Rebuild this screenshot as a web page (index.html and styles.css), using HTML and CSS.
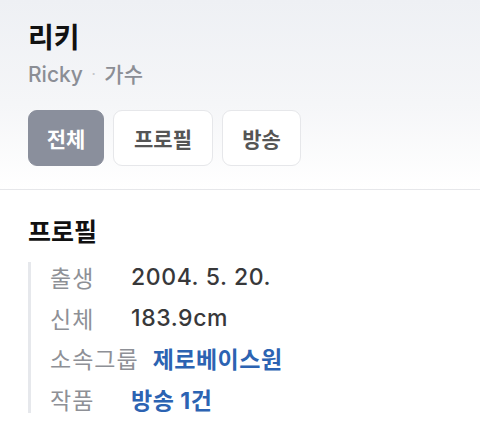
FILE: index.html
```html
<!DOCTYPE html>
<html lang="ko">
<head>
<meta charset="utf-8">
<link rel="stylesheet" href="styles.css">
</head>
<body>
<div class="page">
  <header class="hero">
    <h1 class="name">리키</h1>
    <p class="sub">Ricky <span class="dot">·</span> 가수</p>
    <nav class="tabs">
      <button class="tab active">전체</button>
      <button class="tab">프로필</button>
      <button class="tab">방송</button>
    </nav>
  </header>
  <section class="profile">
    <h2 class="heading">프로필</h2>
    <dl class="info">
      <div class="row"><dt>출생</dt><dd>2004. 5. 20.</dd></div>
      <div class="row"><dt>신체</dt><dd>183.9cm</dd></div>
      <div class="row"><dt>소속그룹</dt><dd class="link">제로베이스원</dd></div>
      <div class="row"><dt>작품</dt><dd class="link">방송 1건</dd></div>
    </dl>
  </section>
</div>
</body>
</html>
```

FILE: styles.css
```css
* { box-sizing: border-box; }
html, body { margin: 0; padding: 0; }
body {
  background: #fff;
  font-family: "Noto Sans CJK KR", "Noto Sans", sans-serif;
  color: #111;
  width: 480px;
  height: 423px;
  overflow: hidden;
}
.hero {
  background: linear-gradient(to bottom, #eef0f4 0%, #f5f6f8 55%, #ffffff 100%);
  padding: 16px 0 23px 28px;
  border-bottom: 1px solid #e6e7ea;
}
.name {
  margin: 0;
  font-size: 28px;
  font-weight: 700;
  line-height: 40px;
  color: #111;
}
.sub {
  margin: 0;
  font-size: 21px;
  line-height: 36px;
  color: #8b8e95;
  font-family: "Inter", "Noto Sans CJK KR", sans-serif;
  font-weight: 500;
}
.sub .dot { color: #c4c6ca; font-size: 14px; margin: 0 3px; vertical-align: 3px; }
.tabs {
  display: flex;
  gap: 9px;
  margin-top: 17px;
}
.tab {
  height: 56px;
  padding: 0 16px;
  border: 1px solid #e6e7ea;
  border-radius: 9px;
  background: #fff;
  font-family: "Noto Sans CJK KR", sans-serif;
  font-size: 21px;
  font-weight: 700;
  color: #555;
  min-width: 79px;
}
.tab:nth-child(2) { min-width: 100px; }
.tab.active {
  background: #8a8f9c;
  border-color: #8a8f9c;
  color: #fff;
  min-width: 76px;
}
.profile { padding: 23px 0 0 28px; }
.heading {
  margin: 0;
  font-size: 25px;
  font-weight: 700;
  line-height: 34px;
  color: #111;
}
.info {
  margin: 15px 0 0 0;
  padding: 1px 0 0 19px;
  border-left: 3px solid #e6e8ec;
  display: flex;
  flex-direction: column;
  gap: 12.67px;
}
.row {
  display: flex;
  align-items: center;
  height: 28px;
}
.row dt {
  min-width: 67px;
  margin-right: 14px;
  font-size: 23px;
  letter-spacing: 1px;
  color: #8e9096;
}
.row dd {
  margin: 0;
  font-size: 23px;
  letter-spacing: 0.6px;
  font-weight: 500;
  color: #38383a;
  font-family: "Inter", "Noto Sans CJK KR", sans-serif;
}
.row dd.link { color: #2c63b2; font-weight: 700; letter-spacing: 0.5px; }
```
